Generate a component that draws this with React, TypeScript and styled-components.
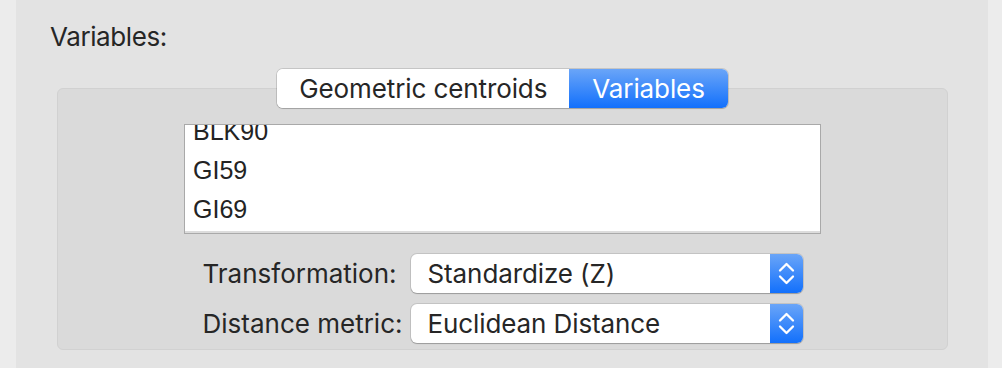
import React from 'react'
import styled, { createGlobalStyle } from 'styled-components'

const GlobalStyle = createGlobalStyle`
	body {
		margin: 0;
		background: #ececec;
		font-family: Inter, "Noto Sans", sans-serif;
		color: #262626;
	}
`

const variables = ['BLK90', 'GI59', 'GI69']

const Stepper = () => (
	<svg width="17" height="23" viewBox="0 0 17 23">
		<path d="M2 8.5 L8.5 2 L15 8.5" fill="none" stroke="#fff" strokeWidth="2.3" strokeLinecap="round" strokeLinejoin="round" />
		<path d="M2 14.5 L8.5 21 L15 14.5" fill="none" stroke="#fff" strokeWidth="2.3" strokeLinecap="round" strokeLinejoin="round" />
	</svg>
)

const Select = ({ value }: { value: string }) => (
	<SelectBox>
		<SelectValue>{value}</SelectValue>
		<SelectArrows>
			<Stepper />
		</SelectArrows>
	</SelectBox>
)

const App = () => {
	return (
		<Page>
			<GlobalStyle />
			<Panel>
				<SectionLabel>Variables:</SectionLabel>
				<TabView>
					<Segmented>
						<Segment>Geometric centroids</Segment>
						<Segment active>Variables</Segment>
					</Segmented>
					<GroupBox>
						<ListBox>
							<ListInner>
								{variables.map(v => (
									<ListItem key={v}>{v}</ListItem>
								))}
							</ListInner>
						</ListBox>
						<FormGrid>
							<FieldLabel>Transformation:</FieldLabel>
							<Select value="Standardize (Z)" />
							<FieldLabel>Distance metric:</FieldLabel>
							<Select value="Euclidean Distance" />
						</FormGrid>
					</GroupBox>
				</TabView>
			</Panel>
		</Page>
	)
}

export default App

const Page = styled.div`
	display: flex;
	width: 1002px;
	height: 368px;
	padding: 0 14px 0 16px;
	box-sizing: border-box;
`

const Panel = styled.section`
	flex: 1;
	background: #e3e3e3;
	padding: 21px 0 0 34px;
	box-sizing: border-box;
`

const SectionLabel = styled.div`
	font-size: 26px;
	line-height: 31px;
	letter-spacing: -0.4px;
`

const TabView = styled.div`
	display: flex;
	flex-direction: column;
	align-items: center;
	width: 891px;
	margin: 17px 0 0 7px;
`

const Segmented = styled.div`
	position: relative;
	z-index: 1;
	display: flex;
	height: 39px;
	margin-bottom: -20px;
	border-radius: 6px;
	background: #fff;
	box-shadow: 0 0 0 1px rgba(0, 0, 0, 0.13), 0 1px 1px rgba(0, 0, 0, 0.15);
	overflow: hidden;
`

const Segment = styled.div<{ active?: boolean }>`
	display: flex;
	align-items: center;
	padding: 0 ${p => (p.active ? '23px' : '22px')};
	font-size: 26px;
	letter-spacing: -0.1px;
	color: ${p => (p.active ? '#fff' : '#262626')};
	background: ${p => (p.active ? 'linear-gradient(#6aa5f8, #1270fc)' : '#fff')};
`

const GroupBox = styled.div`
	align-self: stretch;
	display: flex;
	flex-direction: column;
	align-items: center;
	height: 262px;
	padding-top: 35px;
	box-sizing: border-box;
	background: #dadada;
	border: 1px solid #d1d1d1;
	border-radius: 6px;
`

const ListBox = styled.div`
	width: 637px;
	height: 110px;
	box-sizing: border-box;
	border: 1px solid #a9a9a9;
	background: #fff;
	box-shadow: inset 0 -2px 0 #dcdcdc;
	overflow: hidden;
`

const ListInner = styled.div`
	margin-top: -13px;
	padding-left: 8px;
`

const ListItem = styled.div`
	height: 39px;
	line-height: 39px;
	font-family: "Liberation Sans", Arial, sans-serif;
	font-size: 25px;
	color: #232323;
`

const FormGrid = styled.div`
	display: grid;
	grid-template-columns: 208px 392px;
	row-gap: 11px;
	align-items: center;
	margin-top: 20px;
`

const FieldLabel = styled.div`
	font-size: 26px;
	letter-spacing: 0;
`

const SelectBox = styled.div`
	display: flex;
	height: 39px;
	border-radius: 6px;
	background: #fff;
	box-shadow: 0 0 0 1px rgba(0, 0, 0, 0.1), 0 1px 1px rgba(0, 0, 0, 0.2);
	overflow: hidden;
`

const SelectValue = styled.div`
	flex: 1;
	display: flex;
	align-items: center;
	padding-left: 17px;
	font-size: 26px;
	letter-spacing: -0.1px;
`

const SelectArrows = styled.div`
	width: 33px;
	display: flex;
	align-items: center;
	justify-content: center;
	background: linear-gradient(#6aa5f8, #1270fc);
`
